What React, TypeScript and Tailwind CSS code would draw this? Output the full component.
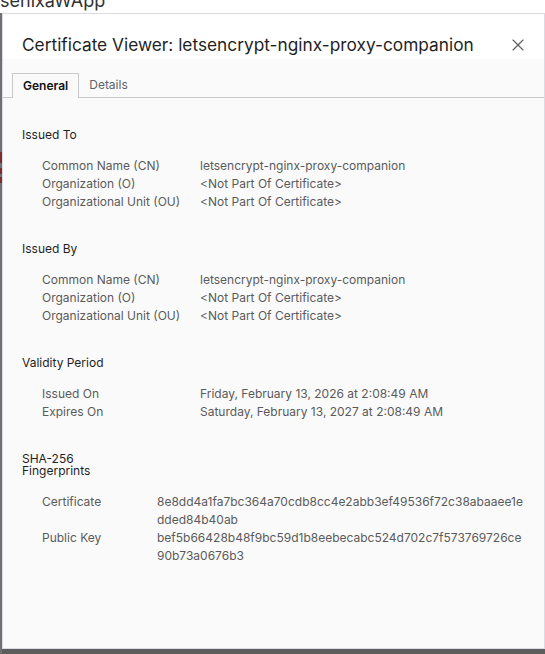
import { X } from "lucide-react";

type Field = { label: string; value: string };

type Section = {
  title: string;
  fields: Field[];
  labelWidth: string;
  gapTop: string;
  headerClass: string;
  rowsGap: string;
  breakValue?: boolean;
};

const NOT_PART = "<Not Part Of Certificate>";
const CN = "letsencrypt-nginx-proxy-companion";

const sections: Section[] = [
  {
    title: "Issued To",
    fields: [
      { label: "Common Name (CN)", value: CN },
      { label: "Organization (O)", value: NOT_PART },
      { label: "Organizational Unit (OU)", value: NOT_PART },
    ],
    labelWidth: "w-[158px]",
    gapTop: "mt-[28px]",
    headerClass: "leading-[18px]",
    rowsGap: "mt-[13px]",
  },
  {
    title: "Issued By",
    fields: [
      { label: "Common Name (CN)", value: CN },
      { label: "Organization (O)", value: NOT_PART },
      { label: "Organizational Unit (OU)", value: NOT_PART },
    ],
    labelWidth: "w-[158px]",
    gapTop: "mt-[29px]",
    headerClass: "leading-[18px]",
    rowsGap: "mt-[13px]",
  },
  {
    title: "Validity Period",
    fields: [
      { label: "Issued On", value: "Friday, February 13, 2026 at 2:08:49 AM" },
      { label: "Expires On", value: "Saturday, February 13, 2027 at 2:08:49 AM" },
    ],
    labelWidth: "w-[158px]",
    gapTop: "mt-[29px]",
    headerClass: "leading-[18px]",
    rowsGap: "mt-[13px]",
  },
  {
    title: "SHA-256 Fingerprints",
    fields: [
      { label: "Certificate", value: "8e8dd4a1fa7bc364a70cdb8cc4e2abb3ef49536f72c38abaaee1edded84b40ab" },
      { label: "Public Key", value: "bef5b66428b48f9bc59d1b8eebecabc524d702c7f573769726ce90b73a0676b3" },
    ],
    labelWidth: "w-[115px]",
    gapTop: "mt-[32px]",
    headerClass: "leading-[12px] w-[80px]",
    rowsGap: "mt-[16px]",
    breakValue: true,
  },
];

function CertSection({ section }: { section: Section }) {
  return (
    <div className={section.gapTop}>
      <div className={`text-[12px] text-[#1f1f1f] ${section.headerClass}`}>{section.title}</div>
      <div className={`${section.rowsGap} pl-[20px]`}>
        {section.fields.map((f) => (
          <div key={f.label} className="flex text-[12px] leading-[18px] text-[#5b5b5b]">
            <div className={`${section.labelWidth} shrink-0`}>{f.label}</div>
            <div className={section.breakValue ? "w-[367px] break-all" : ""}>{f.value}</div>
          </div>
        ))}
      </div>
    </div>
  );
}

export default function App() {
  return (
    <div
      className="h-[654px] w-[545px] flex flex-col bg-[#5d5d5d] overflow-hidden"
      style={{ fontFamily: "Inter, 'Noto Sans', sans-serif" }}
    >
      {/* app title bar behind the dialog, mostly scrolled out of view */}
      <div className="h-[13px] bg-white overflow-hidden shrink-0">
        <div className="-mt-[11px] text-[18px] leading-[24px] text-[#333]">senixaWApp</div>
      </div>

      <div className="flex flex-1 min-h-0">
        <div className="w-[2px] bg-[#707070] shrink-0 flex flex-col">
          <div className="h-[139px]" />
          <div className="h-[11px] bg-[#7a2e2e]" />
          <div className="h-[5px]" />
          <div className="h-[6px] bg-[#7a2e2e]" />
          <div className="h-[3px]" />
          <div className="h-[6px] bg-[#7a2e2e]" />
        </div>

        <div className="flex-1 flex flex-col border border-[#dcdae4] bg-[#fafafa] mb-[5px]">
          <div className="bg-white h-[45px] shrink-0 flex items-start pl-[19px] pr-[16px] pt-[19px]">
            <h1 className="flex-1 text-[17.3px] leading-[24px] text-[#1f1f1f]">
              Certificate Viewer: letsencrypt-nginx-proxy-companion
            </h1>
            <X className="mt-[2px] text-[#5f5f5f]" size={20} strokeWidth={1.4} />
          </div>

          <div className="mt-[14px] flex border-b border-[#c9c9c9] pl-[9px]">
            <div className="-mb-px h-[25px] px-[10px] flex items-center border border-b-0 border-[#c9c9c9] bg-[#fafafa] text-[12px] font-semibold text-[#111]">
              General
            </div>
            <div className="h-[24px] px-[10px] flex items-center text-[12px] text-[#5f6368]">Details</div>
          </div>

          <div className="pl-[19px]">
            {sections.map((s) => (
              <CertSection key={s.title} section={s} />
            ))}
          </div>
        </div>
      </div>
    </div>
  );
}
